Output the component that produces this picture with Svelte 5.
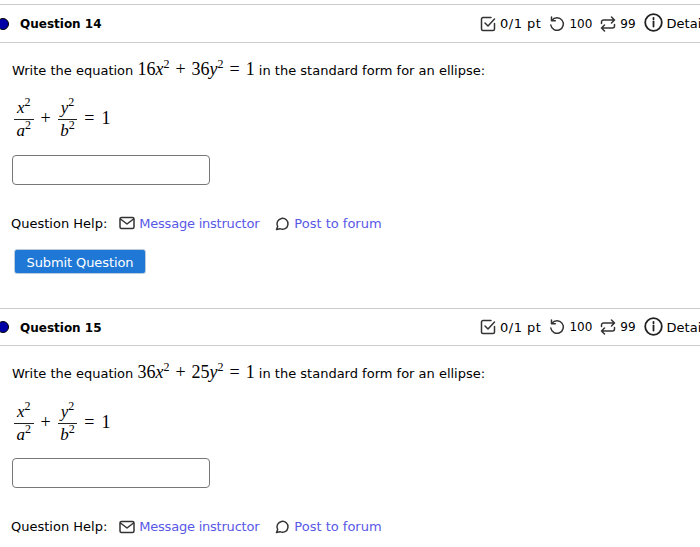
<script>
    const questions = [
        { num: 14, a: "16", b: "36" },
        { num: 15, a: "36", b: "25" },
    ];
</script>

{#snippet frac(top, bottom)}
    <span class="frac">
        <span class="num"><i>{top}</i><sup>2</sup></span>
        <span class="den"><i>{bottom}</i><sup>2</sup></span>
    </span>
{/snippet}

<div class="page">
    {#each questions as q}
        <section class="question">
            <header class="head">
                <span class="dot"></span>
                <h3>Question {q.num}</h3>
                <div class="meta">
                    <span class="item score">
                        <svg width="16" height="16" viewBox="0 0 16 16">
                            <path d="M14.500 7.500V13a1.500 1.500 0 0 1-1.500 1.500H3A1.500 1.500 0 0 1 1.500 13V3A1.500 1.500 0 0 1 3 1.500h8" />
                            <path d="M5 7l3 3 6.500-7" />
                        </svg>
                        <span class="pts">0/1 pt</span>
                    </span>
                    <span class="item">
                        <svg width="16" height="16" viewBox="0 0 16 16">
                            <path d="M3 4.200A6.300 6.300 0 1 1 1.800 9" />
                            <path d="M2.500 1v3.800h3.800" />
                        </svg>
                        <span class="count">100</span>
                    </span>
                    <span class="item">
                        <svg width="16" height="16" viewBox="0 0 16 16">
                            <path d="M1.500 7.500V6a2 2 0 0 1 2-2h11M11.500 1l3 3-3 3" />
                            <path d="M14.500 8.500V10a2 2 0 0 1-2 2h-11M4.500 15l-3-3 3-3" />
                        </svg>
                        <span class="count">99</span>
                    </span>
                    <span class="item">
                        <svg class="info" width="19" height="19" viewBox="0 0 19 19">
                            <circle cx="9.500" cy="9.500" r="8.300" />
                            <path d="M9.500 8.500v5" />
                            <path d="M9.500 4.800v1.400" />
                        </svg>
                        Details
                    </span>
                </div>
            </header>
            <div class="body">
                <p class="prompt">
                    Write the equation
                    <span class="math">{q.a}<i>x</i><sup>2</sup><span class="rel">+</span>{q.b}<i>y</i><sup>2</sup><span class="rel">=</span>1</span>
                    in the standard form for an ellipse:
                </p>
                <div class="formula math">
                    {@render frac("x", "a")}
                    <span class="op">+</span>
                    {@render frac("y", "b")}
                    <span class="op">=</span>
                    <span class="op">1</span>
                </div>
                <input class="answer" type="text" />
                <div class="help">
                    <span class="label">Question Help:</span>
                    <a href="#msg">
                        <svg width="16" height="14" viewBox="0 0 16 14">
                            <rect x="1" y="1.500" width="14" height="11" rx="1.500" />
                            <path d="M1.500 3 8 8l6.500-5" />
                        </svg>
                        <span class="link-text">Message instructor</span>
                    </a>
                    <a href="#forum">
                        <svg width="15" height="15" viewBox="0 0 15 15">
                            <path d="M2.700 10.500A5.500 5.500 0 1 1 5 12.700L1.500 13.500Z" />
                        </svg>
                        <span>Post to forum</span>
                    </a>
                </div>
                <button class="submit">Submit Question</button>
            </div>
        </section>
    {/each}
</div>

<style>
    :global(body) {
        overflow: hidden;
        background: #fff;
    }

    .page {
        width: 700px;
        height: 547px;
        overflow: hidden;
        padding-top: 4px;
        box-sizing: border-box;
        font-family: "DejaVu Sans", sans-serif;
        font-size: 13px;
        color: #000;
    }

    .question {
        height: 303.6px;
    }

    .head {
        display: flex;
        align-items: center;
        height: 38.7px;
        box-sizing: border-box;
        padding-top: 1px;
        border-top: 1px solid #ccc;
        border-bottom: 1px solid #ccc;
        white-space: nowrap;
    }

    .dot {
        width: 12px;
        height: 12px;
        margin-left: -3px;
        border-radius: 50%;
        background: #0000a6;
        border: 1px solid #000;
        box-sizing: border-box;
    }

    h3 {
        margin: 1px 0 0 11px;
        font-size: 12px;
        font-weight: bold;
    }

    .meta {
        display: flex;
        align-items: center;
        margin-left: auto;
        margin-right: -40px;
        width: 260px;
        gap: 8px;
    }

    .item {
        display: flex;
        align-items: center;
        gap: 4px;
    }

    .pts {
        letter-spacing: 0.5px;
    }

    .count {
        font-size: 12px;
    }

    svg {
        fill: none;
        stroke: #333;
        stroke-width: 1.500;
        stroke-linecap: round;
        stroke-linejoin: round;
        flex: none;
    }

    .info {
        stroke: #222;
        stroke-width: 1.800;
        position: relative;
        top: -1px;
    }

    .body {
        padding: 0 12px;
    }

    .prompt {
        margin: 16px 0 0;
        line-height: 21px;
    }

    .math {
        font-family: "Liberation Serif", serif;
        font-size: 18px;
    }

    .rel {
        margin: 0 6px;
    }

    sup {
        font-size: 12px;
        line-height: 0;
    }

    .formula {
        display: flex;
        align-items: center;
        gap: 7px;
        margin: 17px 0 0 2px;
        height: 44px;
    }

    .frac {
        display: inline-flex;
        flex-direction: column;
        align-items: center;
        font-size: 17px;
        line-height: 20px;
    }

    .num {
        border-bottom: 1px solid #222;
        padding: 0 3px 1px;
    }

    .den {
        padding: 1px 1px 0;
    }

    .op {
        font-size: 18px;
        margin-top: -2px;
    }

    .answer {
        display: block;
        box-sizing: border-box;
        width: 198px;
        height: 30px;
        margin-top: 13px;
        border: 1px solid #777;
        border-radius: 4px;
        background: #fff;
    }

    .help {
        display: flex;
        align-items: center;
        gap: 12px;
        margin: 29.5px 0 0 -1px;
        height: 18px;
    }

    a {
        display: flex;
        align-items: center;
        gap: 4px;
        color: #5858e6;
        text-decoration: none;
    }

    a + a {
        margin-left: 4px;
    }

    .link-text {
        letter-spacing: -0.22px;
    }

    .submit {
        display: block;
        margin: 16.5px 0 0 2px;
        width: 132px;
        height: 25px;
        padding: 2px 0 0;
        border: 1px solid #bcd;
        border-radius: 3px;
        background: #1f78d6;
        color: #fff;
        font: inherit;
        letter-spacing: -0.1px;
    }
</style>
